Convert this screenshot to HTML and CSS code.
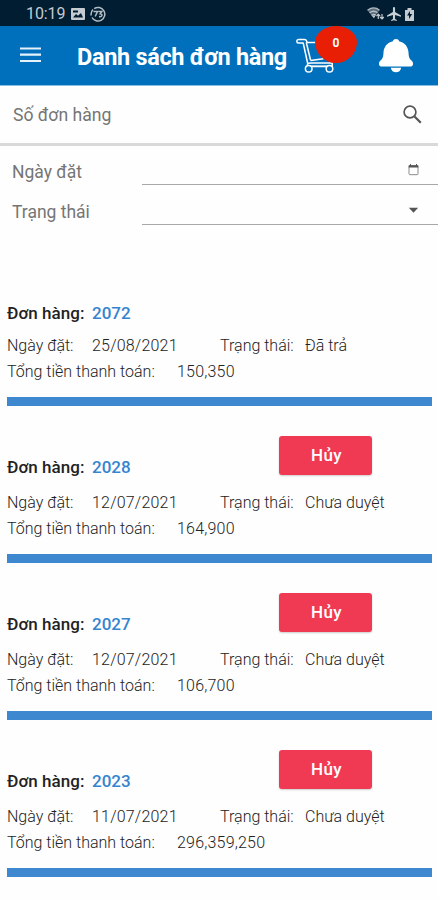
FILE: index.html
```html
<!DOCTYPE html>
<html lang="vi">
<head>
<meta charset="utf-8">
<title>Danh sách đơn hàng</title>
<link rel="stylesheet" href="styles.css">
</head>
<body>
<div class="status">
  <span class="clock">10:19</span>
  <svg class="picture" width="14" height="12" viewBox="0 0 14 12"><rect width="14" height="12" rx="1" fill="#c4cbd1"/><path d="M2 9.5 5 6l2 1.800L10 5l2 4.500z" fill="#001d31"/><path d="M2 2.500h5v2H2z" fill="#001d31"/></svg>
  <svg class="zalo" width="16" height="16" viewBox="0 0 16 16" fill="none" stroke="#b4bdc5" stroke-width="1.500"><path d="M4.200 2.600A6.800 6.800 0 1 1 2 11.500M1.200 9.500A7 7 0 0 1 3 3.400"/><path d="M3.500 5.500h4l-2.300 5M8.500 5.500h3.300l-1.600 2.200c3 0 2 3.600-1.200 2.800"/></svg>
  <span class="spacer"></span>
  <svg class="wifi" width="18" height="14" viewBox="0 0 18 14"><path d="M.5 3.200C4.500.3 9 .3 12.500 3.200L6.500 11z" fill="#5d6e7b"/><path d="M.5 3.200C4.500.3 9 .3 12.500 3.200M2.500 5.800c2.800-2 5.600-2 8 0M4.500 8.200c1.500-1 3-1 4.300 0" fill="none" stroke="#b4bdc5" stroke-width="1.300"/><path d="m4.800 8.500 2.200 2.800 1.500-2.800z" fill="#c4cbd1"/><path d="M11.300 12V7m-1.900 2.200 1.900-2 1.800 2M15 7v5m-2-2 2 2 1.800-2" fill="none" stroke="#c4cbd1" stroke-width="1.200"/></svg>
  <svg class="plane" width="14" height="14" viewBox="2 2 20 20"><path d="M22 16v-2l-8.500-5V3.500a1.500 1.500 0 0 0-3 0V9L2 14v2l8.500-2.500V19L8 20.500V22l4-1 4 1v-1.500L13.500 19v-5.500z" fill="#c9d0d5"/></svg>
  <svg class="battery" width="9" height="13" viewBox="0 0 9 13"><path d="M0 2h2.500V0h4v2H9v11H0z" fill="#c4cbd1"/><path d="m5 3-3 4.500h2V11l3.200-5H5z" fill="#001d31"/></svg>
</div>

<header class="bar">
  <svg class="menu" width="21" height="16" viewBox="0 0 21 16" stroke="#e5f2fb" stroke-width="2.200"><path d="M0 1.500h21M0 7.700h21M0 14h21"/></svg>
  <h1>Danh sách đơn hàng</h1>
  <div class="cart">
    <svg width="40" height="36" viewBox="0 0 40 36" fill="none" stroke="#fff" stroke-width="1.500" stroke-linejoin="round"><path d="M2.500 1.500h6c1 0 1.700.5 2 1.300l.5 1.700H25M2.500 1.500c-2.300 0-2.300 3.500 0 3.500h4.700l4.500 20.500"/><path d="m10.300 4.500 4.300 17.800"/><path d="m14.500 22.500 13-1.800M15.500 25h20.700v3.300H12.500c-1.400 0-1.400-2.800 0-3.100z"/><circle cx="12.700" cy="30.700" r="3.300" fill="#0070bc"/><circle cx="33.500" cy="30.700" r="3.300" fill="#0070bc"/><path d="M16 28.500h14.500"/></svg>
    <span class="count">0</span>
  </div>
  <svg class="bell" width="34" height="34" viewBox="0 0 34 34" fill="#fff"><path d="M17 0c1.700 0 2.700.9 3.100 2.200C26 3.500 29.200 8 29.500 13.500c.2 4.500 1 6.700 3.500 8.600 1.600 1.400 1.400 5.400-1 5.400H2c-2.400 0-2.600-4-1-5.400 2.500-1.900 3.300-4.100 3.500-8.600C4.800 8 8 3.500 13.900 2.200 14.300.9 15.300 0 17 0zM11.800 28.700h10.400c-.6 3-2.500 4.500-5.200 4.500s-4.600-1.500-5.200-4.500z"/></svg>
</header>

<div class="search">
  <span>Số đơn hàng</span>
  <svg width="19" height="19" viewBox="0 0 19 19" fill="none" stroke="#555"><circle cx="7" cy="7" r="5.900" stroke-width="1.700"/><path d="m11.500 11.500 6.300 6.300" stroke-width="2.200"/></svg>
</div>

<div class="filters">
  <div class="filter"><label>Ngày đặt</label><div class="field"><svg width="11" height="12" viewBox="0 0 11 12"><rect x="1" y="1.700" width="9" height="9" rx="1" fill="none" stroke="#8b8b8b"/><path d="M.7 1.200h9.600v2.300H.7zM2 0h1v2H2zM8 0h1v2H8z" fill="#555"/></svg></div></div>
  <div class="filter"><label>Trạng thái</label><div class="field"><svg width="11" height="12" viewBox="0 0 11 12"><path d="M.8 3.800h9.400L5.500 8.700z" fill="#555"/></svg></div></div>
</div>

<main>
  <section class="order first">
    <div class="head"><b>Đơn hàng:</b><a>2072</a></div>
    <div class="line"><span class="k">Ngày đặt:</span><span class="date">25/08/2021</span><span class="state">Trạng thái:</span><span class="value">Đã trả</span></div>
    <div class="line"><span class="total">Tổng tiền thanh toán:</span><span class="sum">150,350</span></div>
  </section>
  <section class="order">
    <div class="head"><b>Đơn hàng:</b><a>2028</a><button>Hủy</button></div>
    <div class="line"><span class="k">Ngày đặt:</span><span class="date">12/07/2021</span><span class="state">Trạng thái:</span><span class="value">Chưa duyệt</span></div>
    <div class="line"><span class="total">Tổng tiền thanh toán:</span><span class="sum">164,900</span></div>
  </section>
  <section class="order">
    <div class="head"><b>Đơn hàng:</b><a>2027</a><button>Hủy</button></div>
    <div class="line"><span class="k">Ngày đặt:</span><span class="date">12/07/2021</span><span class="state">Trạng thái:</span><span class="value">Chưa duyệt</span></div>
    <div class="line"><span class="total">Tổng tiền thanh toán:</span><span class="sum">106,700</span></div>
  </section>
  <section class="order">
    <div class="head"><b>Đơn hàng:</b><a>2023</a><button>Hủy</button></div>
    <div class="line"><span class="k">Ngày đặt:</span><span class="date">11/07/2021</span><span class="state">Trạng thái:</span><span class="value">Chưa duyệt</span></div>
    <div class="line"><span class="total">Tổng tiền thanh toán:</span><span class="sum">296,359,250</span></div>
  </section>
</main>
</body>
</html>
```
FILE: styles.css
```css
* { box-sizing: border-box; }
body {
  margin: 0;
  width: 438px;
  height: 900px;
  overflow: hidden;
  background: #fefefe;
  color: #444;
  font-family: Roboto, sans-serif;
  font-size: 16px;
}
svg { display: block; flex: none; }

.status {
  display: flex;
  align-items: center;
  height: 26px;
  padding: 2px 24px 0 26px;
  background: #001d31;
  color: #c4cbd1;
}
.clock { width: 45px; font-size: 16px; line-height: 24px; letter-spacing: -.1px; }
.zalo { margin-left: 5px; }
.spacer { flex: 1; }
.plane { margin-left: 2px; }
.battery { margin-left: 4px; }

.bar {
  display: flex;
  align-items: flex-start;
  height: 60px;
  padding-left: 20px;
  background: #0070bc;
  border-bottom: 1px solid #8bbce2;
  color: #fff;
}
.menu { margin-top: 21px; }
.bar h1 {
  width: 219px;
  margin: 15px 0 0 36px;
  font-size: 23.5px;
  letter-spacing: -.32px;
  line-height: 32px;
  font-weight: 700;
  white-space: nowrap;
}
.cart { position: relative; width: 62px; height: 48px; padding-top: 12px; }
.cart svg { width: 40px; height: 36px; }
.count {
  position: absolute;
  left: 19px;
  top: 0;
  width: 42px;
  height: 37px;
  border-radius: 21px 21px 21px 21px / 16px 16px 21px 21px;
  background: #e81e05;
  font-size: 12px;
  font-weight: 700;
  line-height: 34px;
  text-align: center;
}
.bell { margin: 13px 0 0 21px; }

.search {
  display: flex;
  align-items: center;
  justify-content: space-between;
  height: 60px;
  padding: 0 16px 0 13px;
  border-bottom: 3px solid #d9d9d9;
  color: #757575;
  font-size: 17.6px;
}

.filters { height: 133px; color: #757575; font-size: 17.5px; }
.filter { display: flex; height: 40px; padding-left: 12px; }
.filter:first-child { height: 39px; }
.filter label { width: 130px; align-self: flex-end; line-height: 26px; }
.field {
  flex: 1;
  display: flex;
  align-items: flex-end;
  justify-content: flex-end;
  padding: 0 19px 8px 0;
  border-bottom: 1px solid #a8a8a8;
}

.order { height: 157px; margin: 0 6px 0 7px; padding-top: 30px; border-bottom: 9px solid #3e88cf; }
.order.first { height: 127px; padding-top: 0; }
.head { display: flex; height: 54px; align-items: flex-start; font-size: 17px; line-height: 24px; }
.first .head { height: 54px; }
.head b, .head a { margin-top: 19px; font-weight: 500; }
.head b { width: 85px; color: #222; letter-spacing: .05px; }
.first .head b, .first .head a { margin-top: 22px; }
.head a { width: 187px; color: #3584cf; }
.head button {
  width: 93px;
  height: 39px;
  padding: 0 0 0 2px;
  border: 0;
  border-radius: 3px;
  background: #f03a54;
  box-shadow: 0 1px 2px #0003;
  color: #fff;
  font: 500 17px/39px Roboto, sans-serif;
  letter-spacing: .4px;
}
.line { display: flex; height: 25.5px; line-height: 25.5px; white-space: nowrap; font-weight: 300; color: #222; }
.k { width: 85px; }
.date { width: 128px; letter-spacing: .2px; }
.state { width: 85px; }
.total { width: 170px; }
.sum { letter-spacing: .2px; }
```
